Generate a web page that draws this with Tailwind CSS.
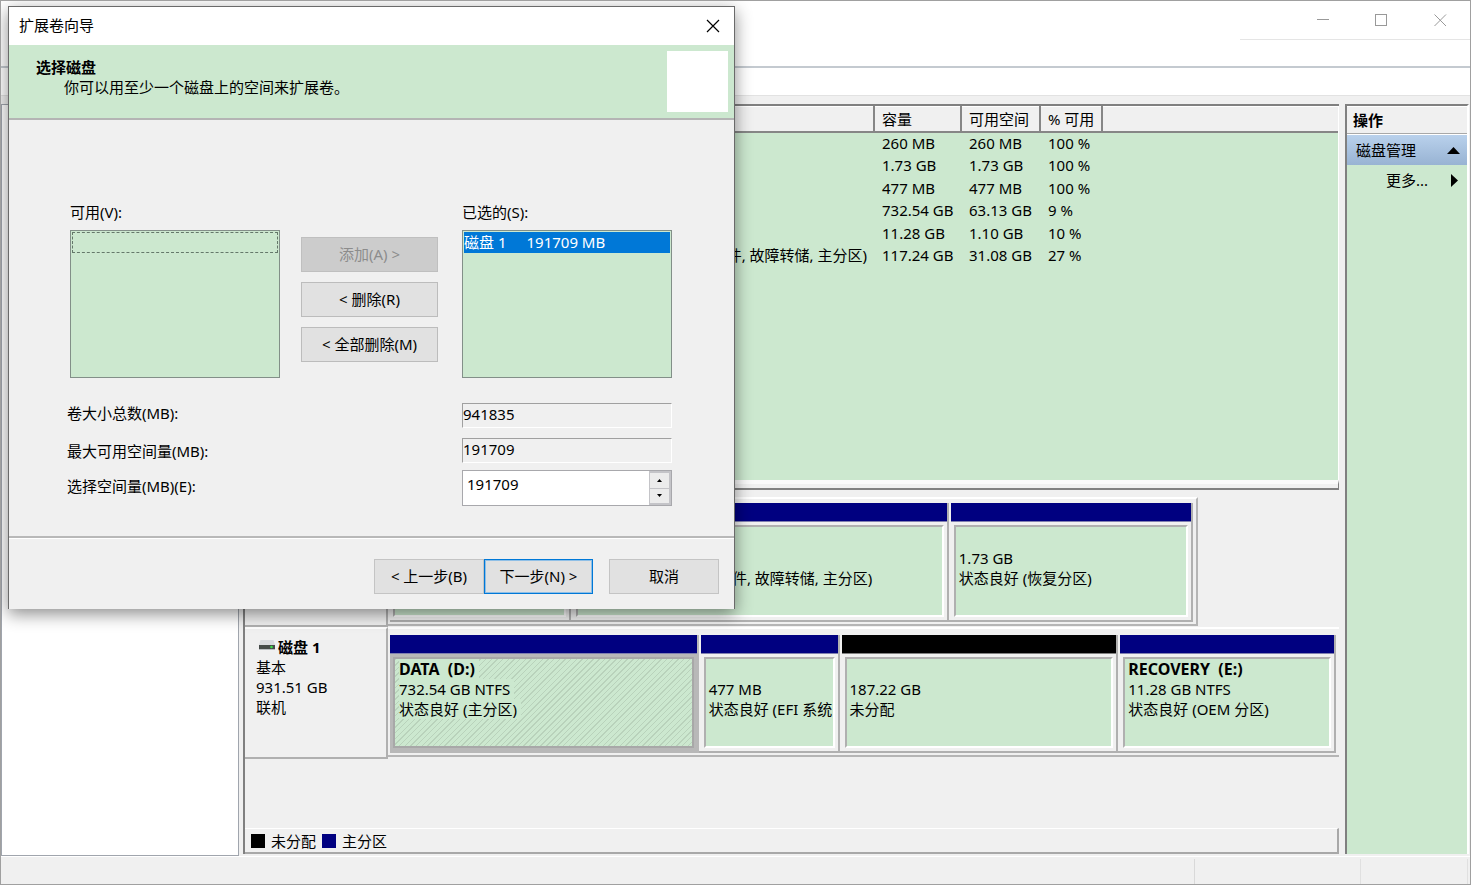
<!DOCTYPE html>
<html lang="zh-CN">
<head>
<meta charset="utf-8">
<title>磁盘管理</title>
<script src="https://cdn.jsdelivr.net/npm/@tailwindcss/browser@4"></script>
</head>
<body class="relative flex min-h-screen flex-col border border-[#a0a0a0] bg-[#f0f0f0] font-['Noto_Sans','Noto_Sans_CJK_SC',sans-serif] text-[15px] leading-5 text-black">

  <!-- Main window title bar -->
  <header class="flex h-[65px] flex-none flex-col items-end bg-white">
    <div class="flex h-[39px] w-[230px] items-center justify-end border-b border-[#e5e5e5] text-[#999]">
      <button aria-label="最小化" class="flex h-full w-[58px] items-center justify-center"><svg width="13" height="13" viewBox="0 0 13 13"><path d="M0 5.500H12" stroke="currentColor"/></svg></button>
      <button aria-label="最大化" class="flex h-full w-[58px] items-center justify-center"><svg width="13" height="13" viewBox="0 0 13 13"><rect x=".5" y=".5" width="11" height="11" fill="none" stroke="currentColor"/></svg></button>
      <button aria-label="关闭窗口" class="flex h-full w-[60px] items-center justify-center"><svg width="13" height="13" viewBox="0 0 13 13"><path d="M.5 .5L12 12M12 .5L.5 12" stroke="currentColor"/></svg></button>
    </div>
  </header>
  <div class="h-[30px] flex-none border-t-2 border-b border-t-[#c4cad0] border-b-[#e2e2e2] bg-white"></div>

  <div class="flex flex-1 gap-1 pt-2">
    <!-- Console tree -->
    <nav aria-label="控制台树" class="w-[238px] flex-none border border-[#a0a5ad] bg-white"></nav>

    <!-- Volumes and disks -->
    <main class="mb-[2px] flex min-w-0 flex-1 flex-col border-t-2 border-l-2 border-[#808080]">
      <section class="flex-1 border-r border-white bg-[#cce8cf]">
        <table class="w-full table-fixed border-collapse text-left">
          <thead>
            <tr class="h-[25px] border-b-2 border-[#868686] bg-[#f0f0f0]">
              <th class="border-t border-r-2 border-t-white border-r-[#868686] p-0 font-normal"></th>
              <th class="w-[87px] border-t border-r-2 border-t-white border-r-[#868686] p-0 pl-[7px] font-normal">容量</th>
              <th class="w-[79px] border-t border-r-2 border-t-white border-r-[#868686] p-0 pl-[7px] font-normal">可用空间</th>
              <th class="w-[62px] border-t border-r-2 border-t-white border-r-[#868686] p-0 pl-[7px] font-normal whitespace-nowrap">% 可用</th>
              <th class="w-[236px] border-t border-t-white p-0"></th>
            </tr>
          </thead>
          <tbody class="whitespace-nowrap">
            <tr class="odd:h-[22px] even:h-[23px]"><td class="p-0"></td><td class="p-0 pl-2">260 MB</td><td class="p-0 pl-2">260 MB</td><td class="p-0 pl-2">100 %</td><td class="p-0"></td></tr>
            <tr class="odd:h-[22px] even:h-[23px]"><td class="p-0"></td><td class="p-0 pl-2">1.73 GB</td><td class="p-0 pl-2">1.73 GB</td><td class="p-0 pl-2">100 %</td><td class="p-0"></td></tr>
            <tr class="odd:h-[22px] even:h-[23px]"><td class="p-0"></td><td class="p-0 pl-2">477 MB</td><td class="p-0 pl-2">477 MB</td><td class="p-0 pl-2">100 %</td><td class="p-0"></td></tr>
            <tr class="odd:h-[22px] even:h-[23px]"><td class="p-0"></td><td class="p-0 pl-2">732.54 GB</td><td class="p-0 pl-2">63.13 GB</td><td class="p-0 pl-2">9 %</td><td class="p-0"></td></tr>
            <tr class="odd:h-[22px] even:h-[23px]"><td class="p-0"></td><td class="p-0 pl-2">11.28 GB</td><td class="p-0 pl-2">1.10 GB</td><td class="p-0 pl-2">10 %</td><td class="p-0"></td></tr>
            <tr class="odd:h-[22px] even:h-[23px]"><td class="p-0 pr-[7px] text-right">状态良好 (启动, 页面文件, 故障转储, 主分区)</td><td class="p-0 pl-2">117.24 GB</td><td class="p-0 pl-2">31.08 GB</td><td class="p-0 pl-2">27 %</td><td class="p-0"></td></tr>
          </tbody>
        </table>
      </section>

      <!-- Splitter -->
      <div class="h-[10px] flex-none border-t-4 border-r border-b-2 border-t-[#fafafa] border-r-[#808080] border-b-[#808080]"></div>

      <section class="flex flex-none flex-col pt-[7px]">
        <div class="flex h-[130px]">
          <div class="w-[143px] flex-none border-r-2 border-b-2 border-r-[#b0b0b0] border-b-[#b0b0b0]"></div>
          <div class="min-w-0 flex-1">
            <div class="flex h-[129px] w-[85.2%] border-t-2 border-r-2 border-b-2 border-t-white border-r-[#b5b5b5] border-b-[#b5b5b5] pt-1 pr-[3px] pb-[2px] pl-[2px]">
              <div class="flex min-w-0 grow-[179] basis-0 flex-col border-r-2 border-b-2 border-[#b0b0b0]">
                <div class="h-[19px] flex-none border-b border-[#8080b0] bg-[#000080]"></div>
                <div class="m-[3px] flex-1 border-2 border-t-[#b0b0b0] border-r-white border-b-white border-l-[#b0b0b0] bg-[#cce8cf]"></div>
              </div>
              <div class="flex min-w-0 grow-[375] basis-0 flex-col border-r-2 border-b-2 border-[#b0b0b0] pl-[2px]">
                <div class="h-[19px] flex-none border-b border-[#8080b0] bg-[#000080]"></div>
                <div class="m-[3px] flex-1 overflow-hidden border-2 border-t-[#b0b0b0] border-r-white border-b-white border-l-[#b0b0b0] bg-[#cce8cf] pt-[41px] pl-[3px] whitespace-nowrap">状态良好 (启动, 页面文件, 故障转储, 主分区)</div>
              </div>
              <div class="flex min-w-0 grow-[241] basis-0 flex-col border-r-2 border-b-2 border-[#b0b0b0] pl-[2px]">
                <div class="h-[19px] flex-none border-b border-[#8080b0] bg-[#000080]"></div>
                <div class="m-[3px] flex-1 overflow-hidden border-2 border-t-[#b0b0b0] border-r-white border-b-white border-l-[#b0b0b0] bg-[#cce8cf] pt-[21px] pl-[3px] whitespace-nowrap">1.73 GB<br>状态良好 (恢复分区)</div>
              </div>
            </div>
          </div>
        </div>

        <div class="flex h-[132px]">
          <div class="w-[143px] flex-none border-t-2 border-r-2 border-b-2 border-t-white border-r-[#b0b0b0] border-b-[#b0b0b0] pt-2 pl-[11px]">
            <div class="flex items-center gap-[3px] pl-[3px] font-bold">
              <svg width="16" height="10" viewBox="0 0 16 10" class="mb-1" aria-hidden="true"><path d="M1.500 0H14.500L16 5H0Z" fill="#d8dade"/><rect y="5" width="16" height="4" fill="#444a48"/><rect y="9" width="16" height="1" fill="#b8bcc0"/><circle cx="12.500" cy="7" r="1.300" fill="#3ddc4a"/></svg>
              磁盘 1
            </div>
            <div>基本</div>
            <div>931.51 GB</div>
            <div>联机</div>
          </div>
          <div class="flex h-[130px] min-w-0 flex-1 border-t-2 border-b-2 border-t-white border-b-[#b5b5b5] pt-[6px] pr-[3px] pb-[2px] pl-[2px]">
            <div class="flex min-w-0 grow-[307] basis-0 flex-col border-r-2 border-b-2 border-[#b8b8b8] bg-[#b8b8b8]">
              <div class="h-[19px] flex-none border-b border-[#8080b0] bg-[#000080]"></div>
              <div class="m-[3px] flex-1 overflow-hidden border-2 border-[#a8a8a8] bg-[#cce8cf] bg-[repeating-linear-gradient(135deg,#b9d2bb_0_1px,transparent_1px_4px)] pl-1 whitespace-nowrap">
                <div class="flex flex-col items-start"><b class="bg-[#cce8cf] pr-1 text-base leading-5 whitespace-pre">DATA  (D:)</b><span class="bg-[#cce8cf] pr-1">732.54 GB NTFS</span><span class="bg-[#cce8cf] pr-1">状态良好 (主分区)</span></div>
              </div>
            </div>
            <div class="flex min-w-0 grow-[137] basis-0 flex-col border-r-2 border-b-2 border-[#b0b0b0] pl-[2px]">
              <div class="h-[19px] flex-none border-b border-[#8080b0] bg-[#000080]"></div>
              <div class="m-[3px] flex-1 overflow-hidden border-2 border-t-[#b0b0b0] border-r-white border-b-white border-l-[#b0b0b0] bg-[#cce8cf] pt-5 pl-[3px] whitespace-nowrap">477 MB<br>状态良好 (EFI 系统</div>
            </div>
            <div class="flex min-w-0 grow-[275] basis-0 flex-col border-r-2 border-b-2 border-[#b0b0b0] pl-[2px]">
              <div class="h-[19px] flex-none border-b border-[#808080] bg-black"></div>
              <div class="m-[3px] flex-1 overflow-hidden border-2 border-t-[#b0b0b0] border-r-white border-b-white border-l-[#b0b0b0] bg-[#cce8cf] pt-5 pl-[3px] whitespace-nowrap">187.22 GB<br>未分配</div>
            </div>
            <div class="flex min-w-0 grow-[214] basis-0 flex-col border-r-2 border-b-2 border-[#b0b0b0] pl-[2px]">
              <div class="h-[19px] flex-none border-b border-[#8080b0] bg-[#000080]"></div>
              <div class="m-[3px] flex-1 overflow-hidden border-2 border-t-[#b0b0b0] border-r-white border-b-white border-l-[#b0b0b0] bg-[#cce8cf] pl-[3px] whitespace-nowrap"><b class="block text-base leading-5 whitespace-pre">RECOVERY  (E:)</b>11.28 GB NTFS<br>状态良好 (OEM 分区)</div>
            </div>
          </div>
        </div>
      </section>

      <!-- Legend -->
      <footer class="mt-[69px] flex h-[26px] flex-none items-center border-t border-r-2 border-b-2 border-t-white border-r-[#a8a8a8] border-b-[#a8a8a8] pl-[6px]">
        <span class="mr-[6px] size-[14px] bg-black"></span>未分配
        <span class="mr-[6px] ml-[6px] size-[14px] bg-[#000080]"></span>主分区
      </footer>
    </main>

    <!-- Actions -->
    <aside class="mr-px mb-[2px] ml-[2px] w-[124px] flex-none border-t-2 border-r-2 border-l-2 border-t-[#808080] border-r-white border-l-[#808080] bg-[#cce8cf]">
      <h2 class="h-7 border-t border-b border-t-white border-b-[#a8a8a8] bg-[#f0f0f0] pt-[3px] pl-[6px] font-bold">操作</h2>
      <button class="flex h-[31px] w-full items-center justify-between border-t border-white bg-linear-to-b from-[#b9d1ec] to-[#98b3d3] pr-[7px] pl-[9px]">磁盘管理 <svg width="13" height="7" viewBox="0 0 13 7"><path d="M0 7L6.500 0L13 7Z"/></svg></button>
      <button class="flex h-[30px] w-full items-center justify-between pr-[9px] pl-[39px]">更多... <svg width="7" height="13" viewBox="0 0 7 13"><path d="M0 0L7 6.500L0 13Z"/></svg></button>
    </aside>
  </div>

  <!-- Status bar -->
  <div class="flex h-7 flex-none justify-end border-t border-white pt-[2px] pr-[2px]">
    <div class="w-[166px] border-l border-[#d9d9d9]"></div>
    <div class="w-[108px] border-r border-l border-[#e0e0e0]"></div>
  </div>

  <!-- Extend volume wizard -->
  <div role="dialog" aria-labelledby="wizard-title" class="absolute top-[5px] left-[7px] w-[727px] border border-b-0 border-[#6a6a6a] bg-[#f0f0f0] shadow-[0_5px_16px_rgba(0,0,0,0.45)]">
    <div class="flex h-[38px] items-center justify-between bg-white pr-[14px] pl-[10px]">
      <h1 id="wizard-title" class="pb-[2px]">扩展卷向导</h1>
      <button aria-label="关闭"><svg width="14" height="14" viewBox="0 0 14 14"><path d="M1 1L13 13M13 1L1 13" stroke="#000" stroke-width="1.200"/></svg></button>
    </div>
    <div class="flex h-[75px] justify-between border-b-2 border-[#b4b4b4] bg-[#cce8cf] pt-[6px] pr-[6px] pl-[27px]">
      <div class="pt-[6px]">
        <h2 class="font-bold">选择磁盘</h2>
        <p class="pl-7">你可以用至少一个磁盘上的空间来扩展卷。</p>
      </div>
      <div class="size-[61px] bg-white"></div>
    </div>

    <div class="border-b-2 border-[#b8b8b8] pt-[82px] pr-[62px] pb-[30px] pl-[61px]">
      <div class="flex">
        <div class="mr-[21px] w-[210px]">
          <div id="available-label" class="mb-2">可用(V):</div>
          <ul role="listbox" aria-labelledby="available-label" class="h-[148px] border border-[#828f88] bg-[#cce8cf] p-px">
            <li class="h-[21px] border border-dashed border-[#64786a]"></li>
          </ul>
        </div>
        <div class="mr-auto flex w-[137px] flex-col gap-[10px] pt-[35px]">
          <button disabled class="h-[35px] border border-[#bfbfbf] bg-[#cccccc] pb-[2px] text-[#8c8c8c]">添加(A) &gt;</button>
          <button class="h-[35px] border border-[#bcbcbc] bg-[#e1e1e1] pb-[2px]">&lt; 删除(R)</button>
          <button class="h-[35px] border border-[#bcbcbc] bg-[#e1e1e1] pb-[2px]">&lt; 全部删除(M)</button>
        </div>
        <div class="w-[210px]">
          <div id="selected-label" class="mb-2">已选的(S):</div>
          <ul role="listbox" aria-labelledby="selected-label" class="h-[148px] border border-[#828f88] bg-[#cce8cf] p-px">
            <li role="option" aria-selected="true" class="flex h-[21px] gap-5 bg-[#0078d7] text-white"><span>磁盘 1</span><span>191709 MB</span></li>
          </ul>
        </div>
      </div>

      <div class="-ml-[3px] flex flex-col pt-[25px]">
        <div class="mb-[10px] flex h-[25px] justify-between">
          <label for="total">卷大小总数(MB):</label>
          <input id="total" readonly value="941835" class="w-[210px] border border-t-[#a0a0a0] border-r-white border-b-white border-l-[#a0a0a0] pb-[3px] outline-none">
        </div>
        <div class="mb-[7px] flex h-[25px] items-center justify-between">
          <label for="max">最大可用空间量(MB):</label>
          <input id="max" readonly value="191709" class="h-full w-[210px] border border-t-[#a0a0a0] border-r-white border-b-white border-l-[#a0a0a0] pb-[3px] outline-none">
        </div>
        <div class="flex h-9 justify-between leading-8">
          <label for="amount">选择空间量(MB)(E):</label>
          <div class="flex w-[210px] border border-[#a8a8ac] bg-white">
            <input id="amount" value="191709" class="min-w-0 flex-1 pb-2 pl-1 outline-none">
            <div class="flex w-[22px] flex-col gap-px bg-[#c4c4c8] p-[2px] pl-px">
              <button aria-label="增加" class="flex flex-1 items-center justify-center bg-[#ececec]"><svg width="5" height="3" viewBox="0 0 5 3"><path d="M0 3L2.500 0L5 3Z"/></svg></button>
              <button aria-label="减少" class="flex flex-1 items-center justify-center bg-[#ececec]"><svg width="5" height="3" viewBox="0 0 5 3"><path d="M0 0L2.500 3L5 0Z"/></svg></button>
            </div>
          </div>
        </div>
      </div>
    </div>

    <div class="flex justify-end border-t border-white pt-5 pr-[15px] pb-[15px]">
      <button class="h-[35px] w-[110px] border border-[#c4c4c4] bg-[#e1e1e1] pb-[2px]">&lt; 上一步(B)</button>
      <button class="mr-4 h-[35px] w-[109px] border border-[#0078d7] bg-[#e1e1e1] pb-[2px] inset-ring inset-ring-[#8fbfe6]">下一步(N) &gt;</button>
      <button class="h-[35px] w-[110px] border border-[#c4c4c4] bg-[#e1e1e1] pb-[2px]">取消</button>
    </div>
  </div>
</body>
</html>
